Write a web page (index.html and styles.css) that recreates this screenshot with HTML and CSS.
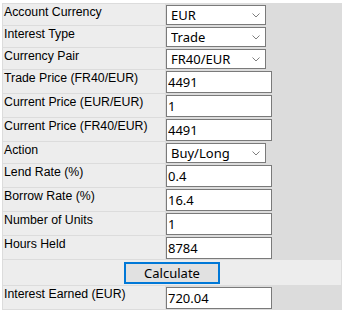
FILE: index.html
```html
<!DOCTYPE html>
<html lang="en">
<head>
  <meta charset="UTF-8">
  <meta name="viewport" content="width=device-width, initial-scale=1.0">
  <title>Interest Calculator</title>
  <link rel="stylesheet" href="styles.css">
</head>
<body>
  <div class="calc">
    <table class="calc-table">
      <tr>
        <td class="lbl">Account Currency</td>
        <td class="val"><span class="sel"><select><option>EUR</option></select><svg class="chev" width="8" height="5" viewBox="0 0 8 5"><path d="M0.5 0.5 L4 4 L7.5 0.5" fill="none" stroke="#707070" stroke-width="0.9"/></svg></span></td>
      </tr>
      <tr>
        <td class="lbl">Interest Type</td>
        <td class="val"><span class="sel"><select><option>Trade</option></select><svg class="chev" width="8" height="5" viewBox="0 0 8 5"><path d="M0.5 0.5 L4 4 L7.5 0.5" fill="none" stroke="#707070" stroke-width="0.9"/></svg></span></td>
      </tr>
      <tr>
        <td class="lbl">Currency Pair</td>
        <td class="val"><span class="sel"><select><option>FR40/EUR</option></select><svg class="chev" width="8" height="5" viewBox="0 0 8 5"><path d="M0.5 0.5 L4 4 L7.5 0.5" fill="none" stroke="#707070" stroke-width="0.9"/></svg></span></td>
      </tr>
      <tr>
        <td class="lbl">Trade Price (FR40/EUR)</td>
        <td class="val"><input type="text" value="4491"></td>
      </tr>
      <tr>
        <td class="lbl">Current Price (EUR/EUR)</td>
        <td class="val"><input type="text" value="1"></td>
      </tr>
      <tr>
        <td class="lbl">Current Price (FR40/EUR)</td>
        <td class="val"><input type="text" value="4491"></td>
      </tr>
      <tr>
        <td class="lbl">Action</td>
        <td class="val"><span class="sel"><select><option>Buy/Long</option></select><svg class="chev" width="8" height="5" viewBox="0 0 8 5"><path d="M0.5 0.5 L4 4 L7.5 0.5" fill="none" stroke="#707070" stroke-width="0.9"/></svg></span></td>
      </tr>
      <tr>
        <td class="lbl">Lend Rate (%)</td>
        <td class="val"><input type="text" value="0.4"></td>
      </tr>
      <tr>
        <td class="lbl">Borrow Rate (%)</td>
        <td class="val"><input type="text" value="16.4"></td>
      </tr>
      <tr>
        <td class="lbl">Number of Units</td>
        <td class="val"><input type="text" value="1"></td>
      </tr>
      <tr>
        <td class="lbl">Hours Held</td>
        <td class="val"><input type="text" value="8784"></td>
      </tr>
      <tr>
        <td class="btn-cell" colspan="2"><button type="button">Calculate</button></td>
      </tr>
      <tr>
        <td class="lbl">Interest Earned (EUR)</td>
        <td class="val"><input type="text" value="720.04"></td>
      </tr>
    </table>
  </div>
</body>
</html>
```

FILE: styles.css
```css
body { margin: 0; background: #fff; font-family: "Liberation Sans", Arial, sans-serif; font-size: 12.3px; color: #000; }
.calc { margin: 3px 0 0 2px; width: 340px; background: #dcdcdc; }
.calc-table { width: 340px; border-spacing: 1px; table-layout: fixed; }
.calc-table td { padding: 0; }
.lbl { width: 161px; padding: 1px 0 0 1px !important; background: #ededed; vertical-align: top; line-height: 14px; }
.val { padding: 1px 0 0 0 !important; vertical-align: top; }
.sel { position: relative; display: inline-block; vertical-align: top; }
select, input, button { font-family: "Noto Sans", "Open Sans", sans-serif; font-size: 13px; color: #000; margin: 0; box-sizing: border-box; }
select { -webkit-appearance: none; appearance: none; display: block; width: 100px; height: 20px; padding: 0 0 0 4px; border: 1px solid #7a7a7a; border-radius: 0; background: #fff; line-height: 18px; outline: none; }
.chev { position: absolute; left: 86px; top: 8px; }
input { display: block; width: 106px; height: 22px; padding: 0 0 0 1px; border: 1px solid #7a7a7a; background: #fff; line-height: 20px; outline: none; }
.btn-cell { background: #ededed; text-align: center; padding: 2px 0 1px !important; }
button { width: 96px; height: 22px; padding: 0; border: 2px solid #0078d7; background: #e1e1e1; line-height: 18px; vertical-align: top; }
```
